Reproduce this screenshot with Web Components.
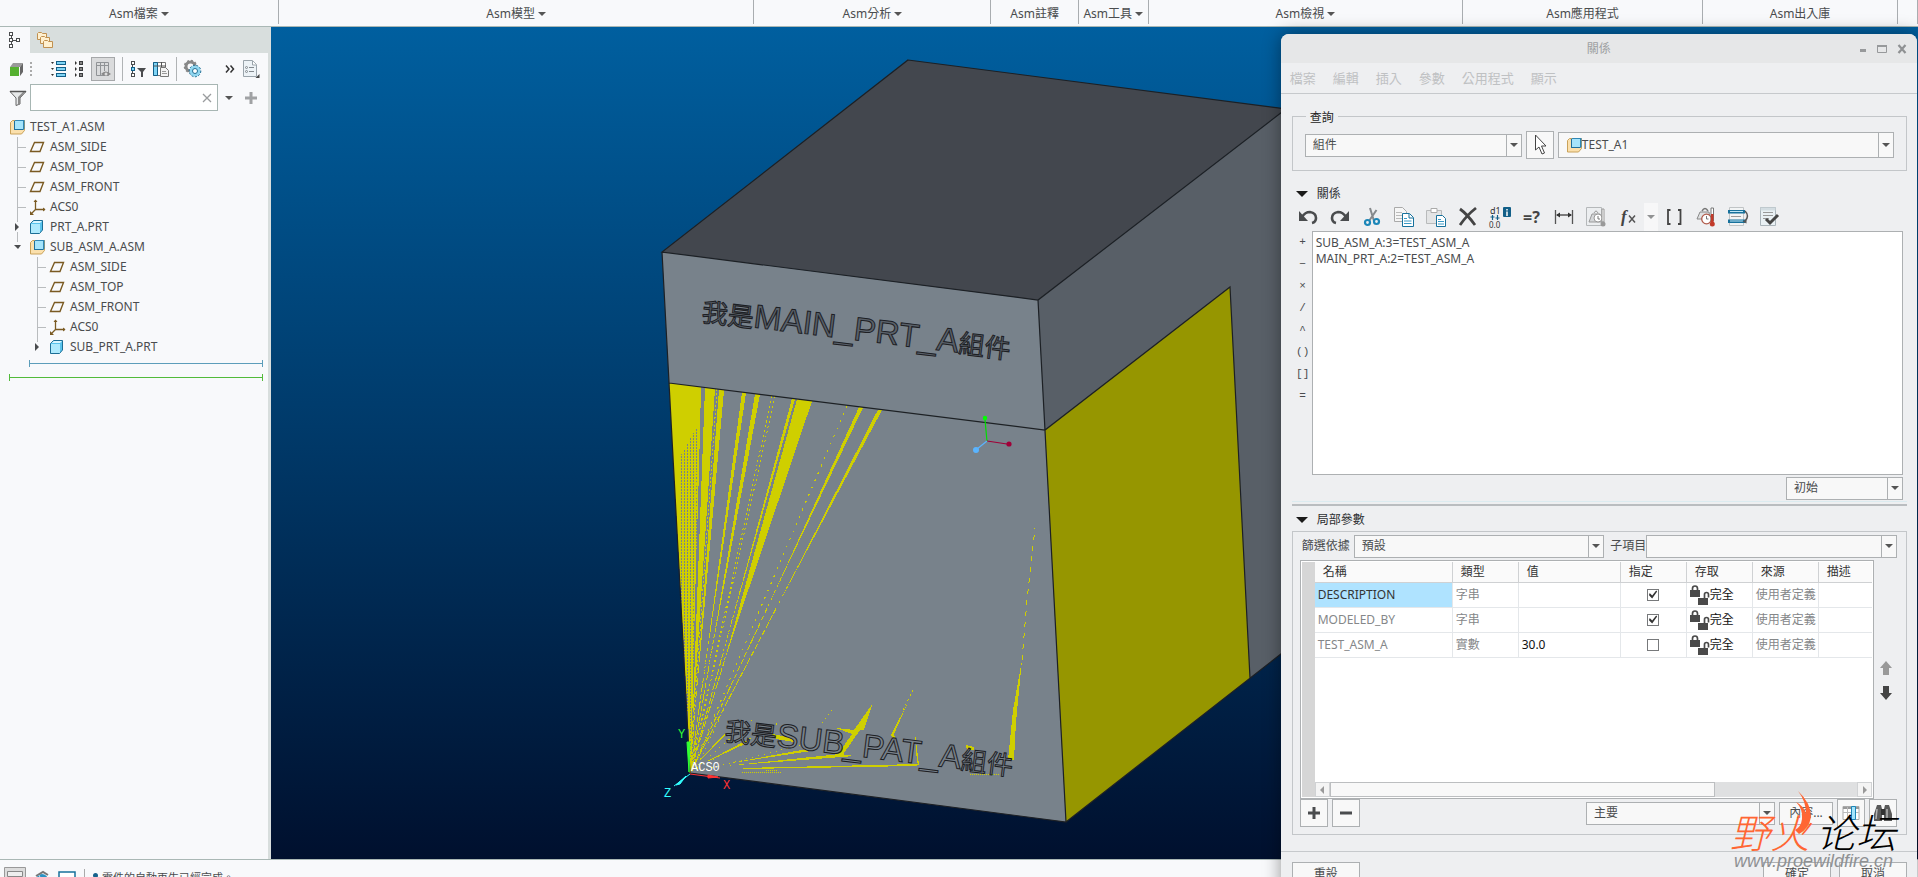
<!DOCTYPE html>
<html lang="zh-Hant">
<head>
<meta charset="utf-8">
<title>TEST_A1</title>
<style>
	html {
		height: 100%;
		overflow: hidden;
	}

	/* the status bar and the dialog footer run past the lower window edge */
	body {
		margin: 0;
		height: calc(100vh + 18px);
		display: flex;
		flex-direction: column;
		position: relative;
		overflow: hidden;
		background: #f8f9fb;
		color: #4a4c4e;
		font: 12px/16px "Noto Sans", "Noto Sans CJK TC", sans-serif;
	}

	main {
		flex: 1;
		display: flex;
		min-height: 0;
	}
</style>
</head>
<body>
	<ribbon-bar>
		<ribbon-group style="flex-grow: 279" menu>Asm檔案</ribbon-group>
		<ribbon-group style="flex-grow: 477" menu>Asm模型</ribbon-group>
		<ribbon-group style="flex-grow: 237" menu>Asm分析</ribbon-group>
		<ribbon-group style="flex-grow: 87">Asm註釋</ribbon-group>
		<ribbon-group style="flex-grow: 69" menu>Asm工具</ribbon-group>
		<ribbon-group style="flex-grow: 315" menu>Asm檢視</ribbon-group>
		<ribbon-group style="flex-grow: 240">Asm應用程式</ribbon-group>
		<ribbon-group style="flex-grow: 195">Asm出入庫</ribbon-group>
		<ribbon-group style="flex-grow: 19" empty></ribbon-group>
	</ribbon-bar>

	<main>
		<side-panel>
			<tree-node root icon="asm" label="TEST_A1.ASM">
				<tree-node icon="plane" label="ASM_SIDE"></tree-node>
				<tree-node icon="plane" label="ASM_TOP"></tree-node>
				<tree-node icon="plane" label="ASM_FRONT"></tree-node>
				<tree-node icon="csys" label="ACS0"></tree-node>
				<tree-node icon="part" label="PRT_A.PRT" state="closed"></tree-node>
				<tree-node icon="asm" label="SUB_ASM_A.ASM" state="open" last>
					<tree-node icon="plane" label="ASM_SIDE"></tree-node>
					<tree-node icon="plane" label="ASM_TOP"></tree-node>
					<tree-node icon="plane" label="ASM_FRONT"></tree-node>
					<tree-node icon="csys" label="ACS0"></tree-node>
					<tree-node icon="part" label="SUB_PRT_A.PRT" state="closed" last></tree-node>
				</tree-node>
			</tree-node>
		</side-panel>
		<model-view></model-view>
	</main>

	<status-bar>零件的自動再生已經完成。</status-bar>

	<relations-dialog></relations-dialog>
	<site-mark></site-mark>

<script>
(() => {

	const icons = {
		tree: [16, 16, `<g fill="#fff" stroke="#4a4c4e"><path fill="none" d="M4.500 4v8M6 8.500h5"/><rect x="2.500" y=".5" width="3" height="3"/><rect x="2.500" y="6.500" width="3" height="3"/><rect x="2.500" y="12.500" width="3" height="3"/><rect x="9.500" y="6.500" width="3" height="3"/></g>`],
		folders: [18, 18, `<g fill="#fff0cf" stroke="#c09050"><path d="M1.500 2.500l1-1h3l1 1h4v6h-9z"/><path d="M4.500 6.500l1-1h3l1 1h4v6h-9z"/><path d="M7.500 10.500l1-1h3l1 1h4v6h-9z"/></g>`],
		green: [16, 16, `<path d="M4 2h10l-3 4H1z" fill="#999"/><path d="M14 2v9l-3 4V6z" fill="#666"/><path d="M1 6h9v9H1z" fill="#55b030"/>`],
		grip: [4, 16, `<path d="M1 1h2v2H1zM1 5h2v2H1zM1 9h2v2H1zM1 13h2v2H1z" fill="#aaa"/>`],
		expand: [16, 16, `<g fill="#7fd4f5" stroke="#125f88"><rect x="5.500" y=".5" width="9" height="3"/><rect x="5.500" y="6.500" width="9" height="3"/><rect x="5.500" y="12.500" width="9" height="3"/></g><path d="M0 1h3L1.500 3zM0 7h3L1.500 9zM0 13h3l-1.500 2z" fill="#333"/>`],
		collapse: [10, 16, `<g fill="#888" stroke="#3c3e40"><rect x="5.500" y=".5" width="3" height="3"/><rect x="5.500" y="6.500" width="3" height="3"/><rect x="5.500" y="12.500" width="3" height="3"/></g><path d="M1 0l2 2-2 2zM1 6l2 2-2 2zM1 12l2 2-2 2z" fill="#333"/>`],
		columns: [16, 16, `<path d="M1.500 1.500h12v13h-12zM1 4.500h13M5.500 1v13M9.500 1v9" fill="none" stroke="#909396"/><path d="M6 13q4.500-5 10 0-5 4-10 0z" fill="#888"/><circle cx="11" cy="13" r="1.500" fill="#ddd"/>`],
		treefilter: [16, 16, `<g fill="#fff" stroke="#4a4c4e"><path fill="none" d="M2.500 3v10"/><rect x="1.500" y=".5" width="3" height="3"/><rect x="1.500" y="6.500" width="3" height="3" fill="#7fd4f5" stroke="#125f88"/><rect x="1.500" y="12.500" width="3" height="3"/></g><path d="M7 7h9l-3 4v5h-2v-5z" fill="#4a4c4e"/>`],
		tabledoc: [16, 16, `<path d="M.5 1.500h12v13H.5z" fill="#fff" stroke="#777"/><path d="M.5 1.500h4v13h-4z" fill="#7fd4f5" stroke="#125f88"/><path d="M1 5h12M8.500 1v6" stroke="#555"/><path d="M7.500 6.500h5l3 3v6h-8z" fill="#f4f4f4" stroke="#777"/><path d="M9 10.500h4M9 12.500h5" stroke="#999"/>`],
		gears: [18, 18, `<circle cx="6.500" cy="6.500" r="4.500" fill="none" stroke="#888" stroke-width="3"/><circle cx="6.500" cy="6.500" r="6" fill="none" stroke="#888" stroke-width="1.500" stroke-dasharray="2 2"/><circle cx="11" cy="11" r="4" fill="#f8f9fb" stroke="#8fd6f0" stroke-width="3"/><circle cx="11" cy="11" r="5.800" fill="none" stroke="#1c6e95" stroke-dasharray="2 1.500"/><circle cx="11" cy="11" r="2.500" fill="#fff" stroke="#1c6e95"/>`],
		more: [10, 10, `<path d="M1 1.500L4 5 1 8.500M5.500 1.500L8.500 5l-3 3.500" fill="none" stroke="#333" stroke-width="1.500"/>`],
		settings: [18, 18, `<path d="M1.500.5h9l4 4v12h-13z" fill="#edf3f7" stroke="#9aa4ab"/><path d="M10.500 1v4h4" fill="#fff" stroke="#9aa4ab"/><g fill="none" stroke="#83898e"><circle cx="4.500" cy="7.500" r="1"/><circle cx="4.500" cy="11.500" r="1"/><path d="M7 7.500h5M7 11.500h5"/></g><path d="M17.500 14v4h-4z" fill="#444"/>`],
		filter: [18, 18, `<path d="M1 2.500h16L11 9v6l-4 1.500V9z" fill="#e7e9ea" stroke="#666"/><path d="M9 8l5-5h2l-5 6v6l-2 1z" fill="#8a8a8a"/><path d="M1 2.500h16" stroke="#555" stroke-width="1.500"/>`],
		clear: [10, 10, `<path d="M1 1l8 8M9 1L1 9" stroke="#9a9c9e" stroke-width="1.300"/>`],
		down: [8, 8, `<path d="M0 2h8L4 6z" fill="#555"/>`],
		plus: [12, 12, `<path d="M4.500 0h3v4.500H12v3H7.500V12h-3V7.500H0v-3h4.500z" fill="currentColor"/>`],
		minus: [12, 12, `<path d="M0 4.500h12v3H0z" fill="currentColor"/>`],
		asm: [16, 16, `<path d="M.5 3.500l2-2h12v10l-3 3.500H.5z" fill="#fbe0ac" stroke="#c9a25a"/><path d="M4 2.500L5.500 1h9v8.500L13 11H4z" fill="#2f86b5"/><path d="M5 2h8v8H5z" fill="#a5e4fb"/><path d="M4.500 2v8.500h9" fill="none" stroke="#1f6f9c"/>`],
		part: [16, 16, `<path d="M.5 4.500l3-3h9v9.500l-3 3.500h-9z" fill="#59c3ec" stroke="#1c6e95"/><path d="M1 5h9v9H1z" fill="#aeeafd"/><path d="M1.500 4L4 2h8l-2 2z" fill="#d8f6ff"/>`],
		plane: [16, 16, `<path d="M4.500 3.500h9l-3.500 9H.500z" fill="none" stroke="#7a5a22" stroke-width="1.400"/>`],
		csys: [16, 16, `<path d="M5.500 1v9.500H15M5.500 10.500L1 15" fill="none" stroke="#7a5a22" stroke-width="1.300"/><path d="M3.500 3l2-2.500 2 2.500zM13 8.500l2.500 2-2.500 2zM0 16v-4l4 4z" fill="#7a5a22"/>`],
		cursor: [16, 24, `<path d="M3.500 2v15l3.500-3 3 7 2.500-1-3-7H14z" fill="#fff" stroke="#444"/>`],
		undo: [20, 20, `<path d="M4 10q3-5 8-5 6 1 6 6 0 4-4 5" fill="none" stroke="#4a4c4e" stroke-width="2.600"/><path d="M1 4v10h9z" fill="#4a4c4e"/>`],
		redo: [20, 20, `<path d="M16 10q-3-5-8-5-6 1-6 6 0 4 4 5" fill="none" stroke="#4a4c4e" stroke-width="2.600"/><path d="M19 4v10h-9z" fill="#4a4c4e"/>`],
		cut: [20, 20, `<path d="M8 1l4 13M14.500 3L7 14" stroke="#85898c" stroke-width="2"/><g fill="none" stroke="#1c86b8" stroke-width="2.200"><circle cx="5.500" cy="15.500" r="2.500"/><circle cx="14.500" cy="14.500" r="2.500"/></g>`],
		copy: [20, 20, `<path d="M.5.500h8l4 4v10H.5z" fill="#f6f6f6" stroke="#aaa"/><path d="M2 5.500h6M2 8.500h6M2 11.500h6" stroke="#bbb"/><path d="M8.500 6.500h7l4 4v9h-11z" fill="#fff" stroke="#17719c"/><path d="M15 7v4h4" fill="none" stroke="#17719c"/><path d="M10 11.500h3M10 14h7.500M10 16.500h7.500" stroke="#3a9ac6"/>`],
		paste: [20, 20, `<path d="M.5 3.500h15v13H.5z" fill="#e3e4e5" stroke="#b8babb"/><path d="M5 1.500h6v4H5z" fill="#fff" stroke="#aaa"/><path d="M10.500 8.500h6l3 3v8h-9z" fill="#fff" stroke="#17719c"/><path d="M12 12.500h3M12 14.500h6M12 17h6" stroke="#3a9ac6"/>`],
		del: [20, 20, `<path d="M2 2q7 5 15 16M18 1Q9 8 2 18" fill="none" stroke="#444" stroke-width="2.800"/>`],
		dims: [22, 20, `<text x="1" y="7" font-size="9" fill="#333" font-family="Noto Sans">d1</text><path d="M3.500 8v5M1.500 10h4M8.500 8v5M6.500 11h4" stroke="#125f88" stroke-width="1.200"/><text x="0" y="21" font-size="8" fill="#333" font-family="Noto Sans">0.0</text><rect x="14" y="0" width="8" height="10" rx="1" fill="#125f88"/><path d="M18 2v1.500M18 4.500V9" stroke="#fff" stroke-width="1.500"/>`],
		verify: [20, 20, `<text x="1" y="16" font-size="16" font-weight="700" fill="#444" font-family="Noto Sans">=?</text>`],
		width: [20, 20, `<path d="M1.500 3v14M18.500 3v14M3 8h14" stroke="#555" stroke-width="1.300"/><path d="M2 8l4-2.500v5zM18 8l-4-2.500v5z" fill="#333"/>`],
		mass: [20, 20, `<path d="M.5.500h15v18H.5z" fill="#eceef0" stroke="#b5b8ba"/><path d="M3 15l3-8h8l1 8z" fill="#d5d7d9" stroke="#999"/><circle cx="12" cy="11" r="4" fill="#fff" stroke="#999"/><path d="M12 9v3h2" stroke="#777" fill="none"/><path d="M8 6q2-4 4 0" fill="none" stroke="#999"/><path d="M16 2h2v13h-2z" fill="#fff" stroke="#999"/><circle cx="17" cy="17" r="2.500" fill="#999"/>`],
		fx: [20, 20, `<text x="3" y="15" font-size="17" font-style="italic" font-weight="700" fill="#444" font-family="Liberation Serif">f</text><path d="M11 8.500l6 7M17 8.500l-6 7" stroke="#555" stroke-width="1.500"/>`],
		brackets: [20, 20, `<path d="M6.500 3H4v14h2.500M14 3h2.500v14H14" fill="none" stroke="#444" stroke-width="1.800"/>`],
		units: [20, 20, `<path d="M1 12l3-7h9l1 7z" fill="#dfe1e2" stroke="#888"/><path d="M6 4q3-5 6 0" fill="none" stroke="#777" stroke-width="1.500"/><circle cx="10.500" cy="12" r="4.800" fill="#fff" stroke="#b05a4a" stroke-width="1.300"/><path d="M10.500 9v3h2" stroke="#777" fill="none"/><path d="M15 1h2.500v13H15z" fill="#fff" stroke="#777"/><path d="M15 7h2.500v8H15z" fill="#c23a2a"/><circle cx="16.300" cy="17" r="2.500" fill="#c23a2a"/>`],
		sort: [20, 20, `<path d="M1.500.500h14v18h-14z" fill="#f2f4f5" stroke="#c0c4c6"/><path d="M0 3h17v3.500H0zM0 12.500h17V16H0z" fill="#17719c"/><path d="M2 4.500h13M2 14h13" stroke="#bfe6f6"/><path d="M3 9.500h10" stroke="#999"/><path d="M17 4q5 5 0 10" fill="none" stroke="#555" stroke-width="1.500"/><path d="M14.500 14.500l4-2v4z" fill="#555"/>`],
		check: [20, 20, `<path d="M.5.500h15v18H.5z" fill="#e9f0f4" stroke="#aab4ba"/><path d="M.5.500h15v3H.5z" fill="#d3dde2"/><path d="M3 5.500h10M3 8.500h10M3 11.500h6" stroke="#999"/><path d="M6 12l4 4 8-8" fill="none" stroke="#444" stroke-width="3"/>`],
		locks: [20, 20, `<g fill="#4a4a4a"><path d="M0 5h10v7H0zM8 13h10v7H8z"/></g><path d="M2.500 6V3.500q0-2.500 2.500-2.500t2.500 2.500V6M14.500 14V9.500Q14.500 7.500 16.500 7.500t2 2v3" fill="none" stroke="#4a4a4a" stroke-width="1.700"/>`],
		up: [12, 14, `<path d="M6 0l6 7H9v7H3V7H0z" fill="#999"/>`],
		dn: [12, 14, `<path d="M6 14l6-7H9V0H3v7H0z" fill="#444"/>`],
		cols: [18, 16, `<path d="M1 1.500h16v13H1z" fill="#fff" stroke="#aaa"/><path d="M1 2h16v2H1z" fill="#999"/><path d="M1 7.500h16M5.500 2v12" stroke="#bbb"/><path d="M9.500 1.500h4v13h-4z" fill="#a5e4fb" stroke="#1c86b8"/>`],
		find: [20, 20, `<path d="M4 2h4l1 4v12H1v-7zM16 2h-4l-1 4v12h8v-7z" fill="#5a5a5a"/><path d="M8 6h4v6H8z" fill="#333"/><path d="M4 6L3 16M14 6v10" stroke="#b5b5b5" stroke-width="1.500"/>`],
		min: [8, 12, `<path d="M1 6h6v3H1z" fill="#97999b"/>`],
		max: [12, 12, `<path d="M1.500 2.500h9v7h-9z" fill="none" stroke="#97999b"/><path d="M1 2h10v2H1z" fill="#97999b"/>`],
		close: [10, 12, `<path d="M1.500 2l7 8M8.500 2l-7 8" stroke="#8f9193" stroke-width="2.200"/>`],
		left: [8, 8, `<path d="M6 0v8L2 4z" fill="#999"/>`],
		right: [8, 8, `<path d="M2 0v8l4-4z" fill="#999"/>`],
		message: [22, 22, `<path d="M.5.500h21v21H.5z" fill="#dcdcdc" stroke="#999"/><path d="M3.500 4.500h15v5h-15z" fill="#eee" stroke="#888"/>`],
		web: [16, 16, `<circle cx="8" cy="10" r="6" fill="#2b93c4"/><path d="M2 6l7-4 5 3" fill="none" stroke="#777" stroke-width="2"/><path d="M5 5l4 9" stroke="#bfe6f6"/>`],
		screen: [18, 14, `<path d="M1 1h16v11H1z" fill="#fff" stroke="#17719c" stroke-width="1.500"/>`],
	};

	const define = (name, styles, markup) => {
		customElements.define(name, class extends HTMLElement {
			constructor() {
				super();
				const html = typeof markup === 'function' ? markup(this) : markup;
				this.attachShadow({ mode: 'open' });
				this.shadowRoot.innerHTML = `<style>${styles}</style>${html}`;
			}
		});
	};

	define('svg-icon', `
		:host {
			display: inline-flex;
			flex: none;
		}
		svg {
			display: block;
			overflow: visible;
		}
	`, el => {
		const [w, h, body] = icons[el.getAttribute('name')];
		return `<svg width="${w}" height="${h}" viewBox="0 0 ${w} ${h}" aria-hidden="true">${body}</svg>`;
	});

	// Ribbon

	define('ribbon-bar', `
		:host {
			flex: none;
			display: flex;
			height: 26px;
			border-bottom: 1px solid #aab8b5;
			background: #f8f9fb;
		}
	`, `<slot></slot>`);

	define('ribbon-group', `
		:host {
			flex: 1 1 0;
			min-width: 0;
			height: 24px;
			box-sizing: border-box;
			border-right: 1px solid #a9adb0;
			display: flex;
			justify-content: center;
			padding-top: 4px;
		}
		button {
			border: 0;
			padding: 0;
			background: none;
			color: inherit;
			font: inherit;
			white-space: nowrap;
			display: flex;
			align-items: center;
			gap: 3px;
		}
	`, el => el.hasAttribute('empty') ? '' : `<button><slot></slot>${el.hasAttribute('menu') ? '<svg-icon name="down"></svg-icon>' : ''}</button>`);

	// Model tree panel

	define('side-panel', `
		:host {
			flex: none;
			width: 268px;
			border-right: 3px solid #d8dedd;
			background: #f8f9fb;
		}
		.tabs {
			display: flex;
			height: 26px;
			background: #d8dedd;
		}
		button {
			border: 0;
			padding: 0;
			background: none;
			display: flex;
			align-items: center;
			justify-content: center;
		}
		.tabs button {
			width: 30px;
		}
		.tabs button[aria-selected="true"] {
			background: #f8f9fb;
		}
		.tools {
			display: flex;
			align-items: center;
			height: 32px;
			padding: 0 8px 0 9px;
			gap: 7px;
		}
		.tools .on {
			width: 24px;
			height: 24px;
			box-sizing: border-box;
			border: 1px solid #a6a8aa;
			background: #dadbdc;
		}
		.grip {
			margin-left: -3px;
		}
		.wide {
			margin-left: 11px;
		}
		hr {
			width: 1px;
			height: 24px;
			margin: 0;
			border: 0;
			background: #b0b3b5;
		}
		.end {
			margin-left: auto;
		}
		.search {
			display: flex;
			align-items: center;
			gap: 7px;
			height: 25px;
			padding: 0 11px 0 9px;
		}
		.box {
			flex: 1;
			min-width: 0;
			display: flex;
			align-items: center;
			height: 25px;
			margin-left: -4px;
			padding-right: 5px;
			border: 1px solid #a7b6b3;
			background: #fff;
		}
		input {
			flex: 1;
			min-width: 0;
			border: 0;
			outline: 0;
			background: none;
			font: inherit;
		}
		.add {
			color: #a0a2a4;
			margin-left: 5px;
		}
		.tree {
			padding: 7px 0 0 10px;
		}
		.insert {
			height: 7px;
			margin: 3px 5px 0 29px;
			box-sizing: border-box;
			border: solid #5c9dba;
			border-width: 0 1px;
			background: linear-gradient(#5c9dba, #5c9dba) center / 100% 1px no-repeat;
		}
		.insert.end-mark {
			margin: 7px 5px 0 9px;
			border-color: #52bb3a;
			background-image: linear-gradient(#52bb3a, #52bb3a);
		}
	`, `
		<div class="tabs" role="tablist">
			<button role="tab" aria-selected="true" aria-label="Model tree"><svg-icon name="tree"></svg-icon></button>
			<button role="tab" aria-selected="false" aria-label="Folders"><svg-icon name="folders"></svg-icon></button>
		</div>
		<div class="tools">
			<button aria-label="Model"><svg-icon name="green"></svg-icon></button>
			<svg-icon class="grip" name="grip"></svg-icon>
			<button class="wide" aria-label="Expand"><svg-icon name="expand"></svg-icon></button>
			<button aria-label="Collapse"><svg-icon name="collapse"></svg-icon></button>
			<button class="on" aria-label="Columns" aria-pressed="true"><svg-icon name="columns"></svg-icon></button>
			<hr>
			<button aria-label="Tree filters"><svg-icon name="treefilter"></svg-icon></button>
			<button aria-label="Tree columns"><svg-icon name="tabledoc"></svg-icon></button>
			<hr>
			<button aria-label="Options"><svg-icon name="gears"></svg-icon></button>
			<button class="end" aria-label="More"><svg-icon name="more"></svg-icon></button>
			<button aria-label="Settings"><svg-icon name="settings"></svg-icon></button>
		</div>
		<div class="search">
			<svg-icon name="filter"></svg-icon>
			<div class="box">
				<input type="text" aria-label="Search tree">
				<button aria-label="Clear"><svg-icon name="clear"></svg-icon></button>
			</div>
			<button aria-label="Search options"><svg-icon name="down"></svg-icon></button>
			<button class="add" aria-label="Add"><svg-icon name="plus"></svg-icon></button>
		</div>
		<div class="tree" role="tree"><slot></slot></div>
		<div class="insert"></div>
		<div class="insert end-mark"></div>
	`);

	define('tree-node', `
		:host {
			display: block;
		}
		.row {
			display: flex;
			align-items: center;
			height: 20px;
			white-space: nowrap;
		}
		svg-icon {
			width: 20px;
		}
		.link {
			width: 20px;
			height: 20px;
			display: flex;
			align-items: center;
			background:
				linear-gradient(#b9bcbe, #b9bcbe) 7px 0 / 1px 20px no-repeat,
				linear-gradient(#b9bcbe, #b9bcbe) 7px 10px / 9px 1px no-repeat;
		}
		.link.closed, .link.open {
			background:
				linear-gradient(#b9bcbe, #b9bcbe) 7px 0 / 1px 5px no-repeat,
				linear-gradient(#b9bcbe, #b9bcbe) 7px 15px / 1px 5px no-repeat;
		}
		:host([last]) .link {
			background: linear-gradient(#b9bcbe, #b9bcbe) 7px 0 / 1px 5px no-repeat;
		}
		.link button {
			border: 0;
			padding: 0;
			width: 8px;
			height: 8px;
			margin-left: 4px;
			background: #4a4c4e;
		}
		.closed button {
			clip-path: polygon(1px 0, 5px 4px, 1px 8px);
		}
		.open button {
			clip-path: polygon(0 2px, 7px 2px, 4px 6px);
		}
		.kids {
			margin-left: 20px;
		}
		:host([root]) .kids {
			margin-left: 0;
		}
	`, el => {
		const state = el.getAttribute('state') || '';
		const link = el.hasAttribute('root') ? '' : `<span class="link ${state}">${state ? '<button aria-label="Toggle"></button>' : ''}</span>`;
		return `
			<div class="row" role="treeitem">${link}<svg-icon name="${el.getAttribute('icon')}"></svg-icon><span>${el.getAttribute('label')}</span></div>
			<div class="kids" role="group"><slot></slot></div>
		`;
	});

	// 3D view

	// origin of the fan where the two coplanar faces fight for depth
	const ox = 690;
	const oy = 773;

	// x range on the seam, then how far down the solid part reaches
	const rays = [
		[705, 715, .9], [719, 724, .85], [742, 746, .75], [755, 760, .72],
		[792, 795, .68], [797, 812, .7], [859, 863, .55], [878, 882, .55],
	];

	const dotted = [[699, 2], [717, 2], [772, 3], [775, 3], [847, 6], [744, 4], [757, 4], [793, 3], [804, 3], [861, 5], [880, 6]];

	const seam = x => 383 + (x - 669) * .1273;

	const ray = ([x1, x2, reach]) => {
		const mid = (x1 + x2) / 2;
		const ex = mid + (ox - mid) * reach;
		const ey = seam(mid) + (oy - seam(mid)) * reach;
		return `<path d="M${x1} ${seam(x1)}L${x2} ${seam(x2)}L${ex} ${ey}z"/><path class="dash" d="M${ex} ${ey}L${ox} ${oy}"/>`;
	};

	define('model-view', `
		:host {
			flex: 1;
			min-width: 0;
			background: linear-gradient(#005f9f, #003a6a 48%, #00102e);
		}
		svg {
			display: block;
			width: 100%;
			height: 100%;
		}
		.edge {
			fill: none;
			stroke: #1d2024;
			stroke-width: 1.2;
		}
		.fight {
			fill: #cfcf00;
			stroke: none;
			shape-rendering: crispEdges;
		}
		.dash {
			fill: none;
			stroke: #cfcf00;
			stroke-dasharray: 5 3;
		}
		.engrave {
			font: 33px "Liberation Sans", sans-serif;
			fill: #59616a;
			stroke: #1d2024;
			stroke-width: 1;
		}
		.lower {
			fill: #78828b;
		}
		.cjk {
			font: 26px "Noto Sans CJK TC", sans-serif;
		}
		.axis {
			font: 12px "Liberation Mono", monospace;
		}
	`, `
		<svg viewBox="271 27 1647 832" preserveAspectRatio="xMinYMin slice">
			<defs>
				<pattern id="dots" width="3" height="3" patternUnits="userSpaceOnUse">
					<path d="M0 0h1v2H0z" fill="#78828b"/>
				</pattern>
			</defs>
			<path d="M908 60L1286 109 1038 300 662 252z" fill="#43474e"/>
			<path d="M1038 300L1286 109V650L1066 822z" fill="#585f67"/>
			<path d="M662 252L1038 300 1066 822 690 773z" fill="#78828b"/>
			<path d="M1045 430L1230 287 1250 678 1066 822z" fill="#969600"/>

			<g class="fight">
				<path d="M669 383L701 387 699 470 695 600 691 773z"/>
				<path d="M681 455L698 425 696 600 691 773 681 600z" fill="url(#dots)"/>
				${rays.map(ray).join('')}
				${dotted.map(([x, gap]) => `<path class="dash" style="stroke-dasharray: 2 ${gap}" d="M${x} ${seam(x)}L${ox} ${oy}"/>`).join('')}
				<path d="M1022 660l-6 62-2 38h-6l5-50z"/>
				<path class="dash" d="M1022 660l5-60 8-72" style="stroke-dasharray: 5 6"/>
				<path d="M873 703l-9 27h-10zM909 700l-15 34 8 27-11-26z"/>
				<path d="M836 728l18 2h6l-18 26-4-2 14-20z"/>
				<path class="dash" d="M913 690l-10 20M832 710l-12 16" style="stroke-dasharray: 2 3"/>
				<path d="M725 764l82-15 4 2zM725 766l115-12 14 2zM740 768l180-4-4 2-170 3z"/>
				<path d="M700 765l45-24 4 1zM700 760l24-26 1 1zM772 734l20 4 2 4-18-3z"/>
				<path d="M917 763l-2-30 4 32zM966 745l8 2v3h-7z"/>
				<path class="dash" d="M742 772h40M766 770h12M970 774h30" style="stroke-dasharray: 1 1"/>
				<path class="dash" d="M692 771L752 720M692 771L780 722M700 771L800 745M698 765L728 700" style="stroke-dasharray: 1 5"/>
			</g>

			<path class="edge" d="M908 60L1286 109 1038 300 662 252zM662 252L690 773 1066 822 1038 300M669 383L1045 430 1230 287 1250 678M1066 822L1286 650"/>

			<text class="engrave" transform="translate(701 321) rotate(7)"><tspan class="cjk">我是</tspan>MAIN_PRT_A<tspan class="cjk">組件</tspan></text>
			<text class="engrave lower" transform="translate(724 740) rotate(7)"><tspan class="cjk">我是</tspan>SUB_PAT_A<tspan class="cjk">組件</tspan></text>

			<g fill="none" stroke-width="1.200">
				<path d="M987 441L985 420" stroke="#0d0"/>
				<path d="M987 441l20 3" stroke="#a00038"/>
				<path d="M987 441l-10 8" stroke="#5ab4ff"/>
			</g>
			<circle cx="985" cy="418" r="2.200" fill="#0f0"/>
			<circle cx="1009" cy="444" r="2.600" fill="#a00038"/>
			<circle cx="976" cy="450" r="3" fill="#5ab4ff"/>

			<path d="M689 772l-2-30h3z" fill="#3f3" stroke="#3f3"/>
			<path d="M690 774l30 4M708 775l10 2-10 1z" fill="#f33" stroke="#f33"/>
			<path d="M690 774l-16 12M686 776l-6 8-4 1z" fill="#3ff" stroke="#3ff"/>
			<g class="axis">
				<text x="678" y="738" fill="#3f3">Y</text>
				<text x="723" y="789" fill="#f33">X</text>
				<text x="664" y="797" fill="#3ff">Z</text>
				<text x="691" y="771" fill="#fff">ACS0</text>
			</g>
		</svg>
	`);

	// Status bar

	define('status-bar', `
		:host {
			flex: none;
			display: flex;
			align-items: center;
			height: 35px;
			padding-left: 4px;
			gap: 8px;
			border-top: 1px solid #aab8b5;
			background: #f8f9fb;
			font-size: 11px;
		}
		button {
			border: 0;
			padding: 0;
			background: none;
			display: flex;
		}
		hr {
			width: 1px;
			height: 18px;
			margin: 0;
			border: 0;
			background: #aaa;
		}
		i {
			width: 5px;
			height: 5px;
			margin: -4px -4px 0 0;
			border-radius: 50%;
			background: #17638c;
		}
	`, `
		<button aria-label="Messages"><svg-icon name="message"></svg-icon></button>
		<button aria-label="Browser"><svg-icon name="web"></svg-icon></button>
		<button aria-label="Full screen"><svg-icon name="screen"></svg-icon></button>
		<hr><i></i>
		<span role="status"><slot></slot></span>
	`);

	// Controls

	define('combo-box', `
		:host {
			display: flex;
			align-items: center;
			height: 23px;
			white-space: nowrap;
		}
		.field {
			flex: 1;
			min-width: 0;
			height: 100%;
			display: grid;
			box-sizing: border-box;
			border: 1px solid #adb0b2;
			background: #f8f8f8;
		}
		label {
			padding-right: var(--label-gap, 4px);
		}
		select {
			grid-area: 1 / 1;
			appearance: none;
			min-width: 0;
			margin: 0;
			border: 0;
			outline: 0;
			border-radius: 0;
			padding: 0 20px 0 7px;
			background: none;
			color: inherit;
			font: inherit;
		}
		:host([icon]) select {
			padding-left: 23px;
		}
		.icon {
			grid-area: 1 / 1;
			place-self: center start;
			margin-left: 8px;
			pointer-events: none;
		}
		.arrow {
			grid-area: 1 / 1;
			justify-self: end;
			width: 14px;
			display: flex;
			align-items: center;
			justify-content: center;
			border-left: 1px solid #adb0b2;
			pointer-events: none;
		}
	`, el => {
		const at = name => el.getAttribute(name) || '';
		return `
			${at('label') ? `<label for="list">${at('label')}</label>` : ''}
			<span class="field">
				<select id="list" ${at('label') ? '' : `aria-label="${at('hint')}"`}><option>${at('value')}</option></select>
				${at('icon') ? `<svg-icon class="icon" name="${at('icon')}"></svg-icon>` : ''}
				<span class="arrow"><svg-icon name="down"></svg-icon></span>
			</span>
		`;
	});

	define('push-button', `
		:host {
			display: inline-flex;
			flex: none;
			width: 68px;
			height: 23px;
		}
		:host([icon]) {
			width: 28px;
			height: 28px;
		}
		button {
			flex: 1;
			display: flex;
			align-items: center;
			justify-content: center;
			padding: 0;
			border: 1px solid #adb0b2;
			background: #f8f8f8;
			color: #4a4c4e;
			font: inherit;
		}
	`, el => {
		const icon = el.getAttribute('icon');
		return icon
			? `<button aria-label="${icon}"><svg-icon name="${icon}"></svg-icon></button>`
			: `<button><slot></slot></button>`;
	});

	const rows = [
		['DESCRIPTION', '字串', '', true],
		['MODELED_BY', '字串', '', true],
		['TEST_ASM_A', '實數', '30.0', false],
	];

	define('param-table', `
		:host {
			display: flex;
			box-sizing: border-box;
			min-height: 0;
			padding: 1px;
			border: 1px solid #adb0b2;
			background: #fff;
		}
		.gutter {
			flex: none;
			width: 13px;
			background: #d6d6d6;
		}
		.body {
			flex: 1;
			min-width: 0;
			display: flex;
			flex-direction: column;
			justify-content: space-between;
		}
		table {
			width: 100%;
			table-layout: fixed;
			border-collapse: separate;
			border-spacing: 0;
		}
		th, td {
			box-sizing: border-box;
			height: 25px;
			padding: 0 0 0 3px;
			border: solid #e4e7ea;
			border-width: 0 1px 1px 0;
			text-align: left;
			font-weight: 400;
			white-space: nowrap;
			overflow: hidden;
			color: #858789;
		}
		th {
			height: 21px;
			padding-left: 8px;
			border-color: #cfd1d3;
			background: #fafafa;
			color: #333;
		}
		th:last-child, td:last-child {
			border-right: 0;
		}
		tr.on td:first-child {
			background: #afe3ff;
			color: #333;
		}
		.value, .access {
			color: #111;
		}
		.access span {
			display: flex;
			align-items: center;
		}
		.pick {
			padding: 0;
			text-align: center;
		}
		input {
			appearance: none;
			display: block;
			width: 12px;
			height: 12px;
			margin: 0 auto;
			box-sizing: border-box;
			border: 1px solid #77797b;
			background: #fff;
		}
		input:checked::before {
			content: "";
			display: block;
			width: 10px;
			height: 10px;
			background: #333;
			clip-path: polygon(1px 4px, 2px 4px, 4px 6px, 8px 1px, 9px 2px, 4px 9px, 1px 6px);
		}
		.scroll {
			display: flex;
			height: 15px;
			background: #dfe0e1;
		}
		.scroll button {
			width: 15px;
			padding: 0;
			border: 1px solid #d0d2d4;
			background: #f4f4f4;
			display: flex;
			align-items: center;
			justify-content: center;
		}
		.track {
			flex: 1;
		}
		.thumb {
			width: 73%;
			height: 100%;
			box-sizing: border-box;
			border: 1px solid #bcbec0;
			background: #f8f8f8;
		}
	`, `
		<div class="gutter"></div>
		<div class="body">
			<table>
				<colgroup>
					<col style="width: 138px"><col style="width: 66px"><col style="width: 102px">
					<col style="width: 66px"><col style="width: 66px"><col style="width: 66px"><col>
				</colgroup>
				<thead>
					<tr><th>名稱</th><th>類型</th><th>值</th><th>指定</th><th>存取</th><th>來源</th><th>描述</th></tr>
				</thead>
				<tbody>
					${rows.map(([name, type, value, on], i) => `
						<tr class="${i ? '' : 'on'}">
							<td>${name}</td><td>${type}</td><td class="value">${value}</td>
							<td class="pick"><input type="checkbox" aria-label="指定 ${name}" ${on ? 'checked' : ''}></td>
							<td class="access"><span><svg-icon name="locks"></svg-icon>完全</span></td>
							<td>使用者定義</td><td></td>
						</tr>
					`).join('')}
				</tbody>
			</table>
			<div class="scroll">
				<button aria-label="Scroll left"><svg-icon name="left"></svg-icon></button>
				<div class="track"><div class="thumb"></div></div>
				<button aria-label="Scroll right"><svg-icon name="right"></svg-icon></button>
			</div>
		</div>
	`);

	const edit_tools = ['undo', 'redo', 'cut', 'copy', 'paste', 'del', 'dims', 'verify', 'width', 'mass', 'fx', '', 'brackets', 'units', 'sort', 'check'];
	const operators = ['+', '−', '×', '/', '^', '()', '[]', '='];

	define('relations-dialog', `
		:host {
			position: absolute;
			top: 34px;
			right: 1px;
			bottom: 0;
			width: calc(100% / 3 - 3px);
			display: flex;
			flex-direction: column;
			border-radius: 8px 8px 0 0;
			overflow: hidden;
			background: #eeeff1;
			box-shadow: 0 0 18px rgba(0, 0, 0, .4);
		}
		button {
			border: 0;
			padding: 0;
			background: none;
			color: inherit;
			font: inherit;
			display: flex;
			align-items: center;
			justify-content: center;
		}
		header {
			display: flex;
			align-items: center;
			height: 29px;
			padding: 0 10px;
			background: #e6e7e8;
			color: #9c9ea0;
		}
		h1 {
			flex: 1;
			margin: 0;
			padding-left: 48px;
			font: inherit;
			text-align: center;
		}
		.window {
			display: flex;
			gap: 9px;
		}
		nav {
			display: flex;
			align-items: center;
			gap: 17px;
			height: 30px;
			padding: 0 9px;
			border-bottom: 1px solid #c6c9cc;
			color: #bfc1c3;
			font-size: 13px;
		}
		.content {
			flex: 1;
			min-height: 0;
			display: flex;
			flex-direction: column;
			padding: 13px 10px 0 11px;
		}
		fieldset {
			display: flex;
			align-items: center;
			gap: 4px;
			min-width: 0;
			margin: 0;
			padding: 6px 12px 11px;
			border: 1px solid #c3c6c9;
		}
		legend {
			height: 18px;
			padding: 0 4px;
			margin-left: 1px;
			line-height: 22px;
			color: #222;
		}
		.kind {
			flex: 217;
		}
		.model {
			flex: 336;
			height: 26px;
		}
		h2 {
			display: flex;
			align-items: center;
			gap: 9px;
			height: 19px;
			margin: 0;
			padding-left: 4px;
			font: inherit;
			color: #2c2e30;
		}
		h2::before {
			content: "";
			border: solid transparent;
			border-width: 6px 6px 0;
			border-top-color: #1a1a1a;
		}
		.relations {
			flex: 317;
			display: flex;
			flex-direction: column;
			margin-top: 13px;
		}
		.tools {
			display: flex;
			height: 28px;
		}
		.tools button {
			width: 32px;
		}
		.tools .drop {
			width: 14px;
			background: #fdfdfd;
			opacity: .6;
		}
		.edit {
			flex: 1;
			display: flex;
			padding-right: 4px;
		}
		.ops {
			width: 20px;
		}
		.ops button {
			width: 22px;
			height: 22px;
			font: 11px/16px "Liberation Mono", monospace;
			white-space: nowrap;
		}
		textarea {
			flex: 1;
			min-width: 0;
			box-sizing: border-box;
			margin: 0;
			padding: 3px;
			border: 1px solid #adb0b2;
			outline: 0;
			border-radius: 0;
			resize: none;
			background: #fff;
			color: #4a4c4e;
			font: inherit;
		}
		.state {
			display: flex;
			justify-content: flex-end;
			padding: 2px 4px 1px 0;
		}
		.state combo-box {
			width: 117px;
		}
		.split {
			height: 2px;
			border-top: 1px solid #dcebf0;
			border-bottom: 2px solid #babdc0;
			margin-bottom: 5px;
		}
		.params {
			flex: 325;
			display: flex;
			flex-direction: column;
			gap: 1px;
		}
		.frame {
			flex: 1;
			display: flex;
			flex-direction: column;
			padding: 3px 9px 7px 7px;
			border: 1px solid #c3c6c9;
		}
		.filters {
			display: flex;
			gap: 6px;
			padding: 0 0 2px 2px;
		}
		.filters .by {
			flex: 302;
		}
		.filters .sub {
			flex: 286;
			--label-gap: 0;
		}
		.grid {
			flex: 1;
			display: flex;
		}
		param-table {
			flex: 1;
			min-width: 0;
		}
		.order {
			width: 23px;
			display: flex;
			flex-direction: column;
			align-items: flex-end;
			gap: 11px;
			padding-top: 101px;
		}
		.order button {
			width: 23px;
		}
		.actions {
			display: flex;
			align-items: center;
			gap: 4px;
		}
		.actions combo-box {
			width: 189px;
			margin-left: auto;
		}
		.actions .props {
			width: 54px;
		}
		footer {
			display: flex;
			gap: 8px;
			margin-top: 16px;
			padding: 10px 10px 10px 11px;
			border-top: 1px solid #c6c9cc;
		}
		footer .ok {
			margin-left: auto;
		}
	`, `
		<header>
			<h1>關係</h1>
			<div class="window">
				<button aria-label="Minimize"><svg-icon name="min"></svg-icon></button>
				<button aria-label="Maximize"><svg-icon name="max"></svg-icon></button>
				<button aria-label="Close"><svg-icon name="close"></svg-icon></button>
			</div>
		</header>
		<nav>
			<button>檔案</button><button>編輯</button><button>插入</button>
			<button>參數</button><button>公用程式</button><button>顯示</button>
		</nav>
		<div class="content">
			<fieldset>
				<legend>查詢</legend>
				<combo-box class="kind" hint="類型" value="組件"></combo-box>
				<push-button icon="cursor"></push-button>
				<combo-box class="model" hint="模型" value="TEST_A1" icon="asm"></combo-box>
			</fieldset>
			<section class="relations">
				<h2>關係</h2>
				<div class="tools">
					${edit_tools.map(name => name
						? `<button aria-label="${name}"><svg-icon name="${name}"></svg-icon></button>`
						: `<button class="drop" aria-label="functions"><svg-icon name="down"></svg-icon></button>`).join('')}
				</div>
				<div class="edit">
					<div class="ops">${operators.map(op => `<button>${op}</button>`).join('')}</div>
					<textarea aria-label="關係" spellcheck="false">SUB_ASM_A:3=TEST_ASM_A
MAIN_PRT_A:2=TEST_ASM_A</textarea>
				</div>
				<div class="state"><combo-box hint="初始" value="初始"></combo-box></div>
			</section>
			<div class="split"></div>
			<section class="params">
				<h2>局部參數</h2>
				<div class="frame">
					<div class="filters">
						<combo-box class="by" label="篩選依據" value="預設"></combo-box>
						<combo-box class="sub" label="子項目"></combo-box>
					</div>
					<div class="grid">
						<param-table></param-table>
						<div class="order">
							<button aria-label="Move up"><svg-icon name="up"></svg-icon></button>
							<button aria-label="Move down"><svg-icon name="dn"></svg-icon></button>
						</div>
					</div>
					<div class="actions">
						<push-button icon="plus"></push-button>
						<push-button icon="minus"></push-button>
						<combo-box hint="主要" value="主要"></combo-box>
						<push-button class="props">內容...</push-button>
						<push-button icon="cols"></push-button>
						<push-button icon="find"></push-button>
					</div>
				</div>
			</section>
		</div>
		<footer>
			<push-button>重設</push-button>
			<push-button class="ok">確定</push-button>
			<push-button>取消</push-button>
		</footer>
	`);

	define('site-mark', `
		:host {
			position: absolute;
			right: 22px;
			bottom: 24px;
			width: 166px;
			pointer-events: none;
		}
		.name {
			display: flex;
			justify-content: space-between;
			font: italic 300 40px/40px "Noto Sans CJK SC", sans-serif;
			color: #000;
		}
		.name span:first-child {
			color: #ff6633;
		}
		.url {
			padding-left: 4px;
			font: italic 18px/20px "Liberation Sans", sans-serif;
			color: #8f9193;
		}
		svg {
			position: absolute;
			left: 64px;
			top: -20px;
		}
	`, `
		<div class="name"><span>野火</span><span>论坛</span></div>
		<div class="url">www.proewildfire.cn</div>
		<svg width="18" height="44" viewBox="0 0 18 44" aria-hidden="true">
			<path d="M4 0Q17 12 17 26 15 38 5 43L1 39Q7 36 8 28 9 18 2 11 10 15 12 23 12 10 4 0z" fill="#ff6633"/>
		</svg>
	`);

})();
</script>
</body>
</html>
